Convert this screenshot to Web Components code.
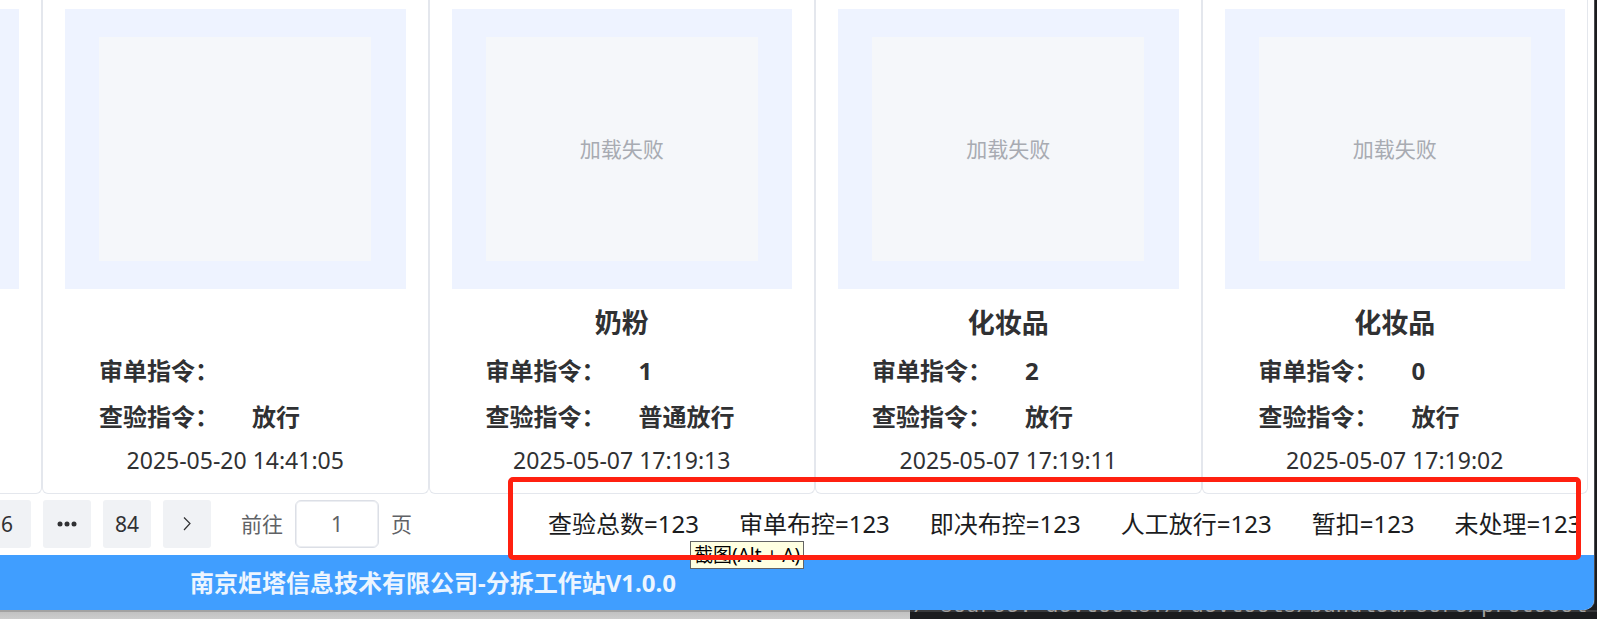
<!DOCTYPE html>
<html lang="zh-CN">
<head>
<meta charset="utf-8">
<title>分拆工作站</title>
<style>
html, body { margin: 0; height: 100%; }
body { font-family: "Noto Sans", "Noto Sans CJK SC", sans-serif; background: #1b1c1e; overflow: hidden; }
</style>
</head>
<body>
<work-station></work-station>
<script>
const define = (name, html) => {
  const template = document.createElement('template');
  template.innerHTML = html;
  customElements.define(name, class extends HTMLElement {
    constructor() {
      super();
      this.attachShadow({ mode: 'open' }).append(template.content.cloneNode(true));
    }
  });
};

define('goods-card', `
<style>
:host { display: block; box-sizing: border-box; border: 1px solid #e4e7ed; border-top: 0; border-radius: 0 0 6px 6px; padding: 9px 22px 13px; color: #303133; }
:host([blank]) dl { display: none; }
.photo { display: grid; height: 280px; box-sizing: border-box; padding: 28px 10%; background: #eef3ff; }
.error { display: grid; place-items: center; padding-bottom: 2px; background: #f5f7fa; color: #a8abb2; font-size: 21px; }
h3 { margin: 16px 0 7px; height: 36px; font-size: 27px; line-height: 36px; text-align: center; }
dl { margin: 0 34px; display: grid; grid-template-columns: max-content 1fr; column-gap: 33px; font-size: 24px; line-height: 46px; font-weight: 700; }
dt, dd { margin: 0; height: 46px; white-space: nowrap; }
time { display: block; font-size: 23px; line-height: 40px; text-align: center; }
</style>
<div class="photo"><div class="error"><slot name="error"></slot></div></div>
<h3><slot name="title"></slot></h3>
<dl><dt>审单指令：</dt><dd><slot name="audit"></slot></dd><dt>查验指令：</dt><dd><slot name="check"></slot></dd></dl>
<time><slot name="time"></slot></time>`);

define('page-nav', `
<style>
:host { display: flex; align-items: center; gap: 12px; font-size: 21px; color: #606266; }
button { width: 48px; height: 48px; padding: 0; border: 0; border-radius: 3px; background: #f0f2f5; color: #303133; font: inherit; display: grid; place-items: center; }
label { display: flex; align-items: center; gap: 12px; margin-left: 18px; white-space: nowrap; }
label span { padding-bottom: 2px; }
input { width: 84px; height: 48px; box-sizing: border-box; border: 1px solid #dcdfe6; border-radius: 6px; box-shadow: inset 0 0 0 1px #eceef2; background: #fff; font: inherit; color: #606266; text-align: center; padding: 0; }
</style>
<button>6</button>
<button aria-label="更多"><svg width="20" height="8" viewBox="0 0 20 8" fill="#303133"><circle cx="3" cy="4" r="2.5"/><circle cx="10" cy="4" r="2.5"/><circle cx="17" cy="4" r="2.5"/></svg></button>
<button>84</button>
<button aria-label="下一页"><svg width="16" height="16" viewBox="0 0 16 16" fill="none" stroke="#303133" stroke-width="1.2"><path d="M5 1.500l6 6-6 6.500"/></svg></button>
<label><span>前往</span><input value="1"><span>页</span></label>`);

define('stat-list', `
<style>
:host { display: block; overflow: hidden; }
ul { display: flex; gap: 40px; margin: 0; padding: 0; list-style: none; font-size: 24px; line-height: 34px; white-space: nowrap; color: #1b1c1e; }
</style>
<ul><li>查验总数=123</li><li>审单布控=123</li><li>即决布控=123</li><li>人工放行=123</li><li>暂扣=123</li><li>未处理=123</li></ul>`);

define('hint-tip', `
<style>
:host { display: block; box-sizing: border-box; border: 1px solid #646464; background: #ffffe1; color: #000; font-size: 19px; line-height: 26px; padding: 0 3px; white-space: nowrap; }
</style><slot></slot>`);

define('console-strip', `
<style>
:host { display: flex; height: 9px; overflow: hidden; background: #1b1c1e; }
.edge { flex: 0 0 57%; background: linear-gradient(#a2a2a2 2px, #c2c2c2 2px, #cccccc); }
.log { display: flex; align-items: flex-end; flex: 1; min-width: 0; height: 8px; padding-left: 3px; background: linear-gradient(#38393b 2px, #1b1c1e 2px); font: 22px/22px "Liberation Mono", monospace; white-space: pre; color: #a0a0a0; overflow: hidden; }
</style><div class="edge"></div><div class="log"><slot></slot></div>`);

define('work-station', `
<style>
:host { display: block; position: relative; overflow: hidden; }
main { margin-right: 3px; background: #fff; border-radius: 0 0 10px 0; box-shadow: 1px 0 0 #4a4b4f; overflow: hidden; }
.cards { display: flex; justify-content: flex-end; margin-right: 6px; overflow: hidden; }
goods-card { flex: 0 0 calc((100% - 42px) / 4); }
.bar { display: flex; align-items: center; box-sizing: border-box; height: 61px; padding-bottom: 1px; }
page-nav { flex: none; margin-left: -17px; }
stat-list { flex: 1; min-width: 0; margin: 0 14px 0 136px; }
footer { padding: 1px 0 0 190px; background: #409eff; color: #ecf5ff; font-size: 24px; font-weight: 700; line-height: 54px; }
.mark { position: absolute; left: 508px; right: 16px; top: 477px; height: 83px; box-sizing: border-box; border: 5px solid #ff2010; border-radius: 5px; }
hint-tip { position: absolute; left: 690px; top: 541px; }
</style>
<main>
<div class="cards">
<goods-card blank></goods-card>
<goods-card><span slot="check">放行</span><span slot="time">2025-05-20 14:41:05</span></goods-card>
<goods-card><span slot="error">加载失败</span><span slot="title">奶粉</span><span slot="audit">1</span><span slot="check">普通放行</span><span slot="time">2025-05-07 17:19:13</span></goods-card>
<goods-card><span slot="error">加载失败</span><span slot="title">化妆品</span><span slot="audit">2</span><span slot="check">放行</span><span slot="time">2025-05-07 17:19:11</span></goods-card>
<goods-card><span slot="error">加载失败</span><span slot="title">化妆品</span><span slot="audit">0</span><span slot="check">放行</span><span slot="time">2025-05-07 17:19:02</span></goods-card>
</div>
<div class="bar"><page-nav></page-nav><stat-list></stat-list></div>
<footer>南京炬塔信息技术有限公司-分拆工作站V1.0.0</footer>
</main>
<console-strip>/ source: devtools://devtools/bundled/core/protocol</console-strip>
<hint-tip>截图(Alt + A)</hint-tip>
<div class="mark"></div>`);
</script>
</body>
</html>
